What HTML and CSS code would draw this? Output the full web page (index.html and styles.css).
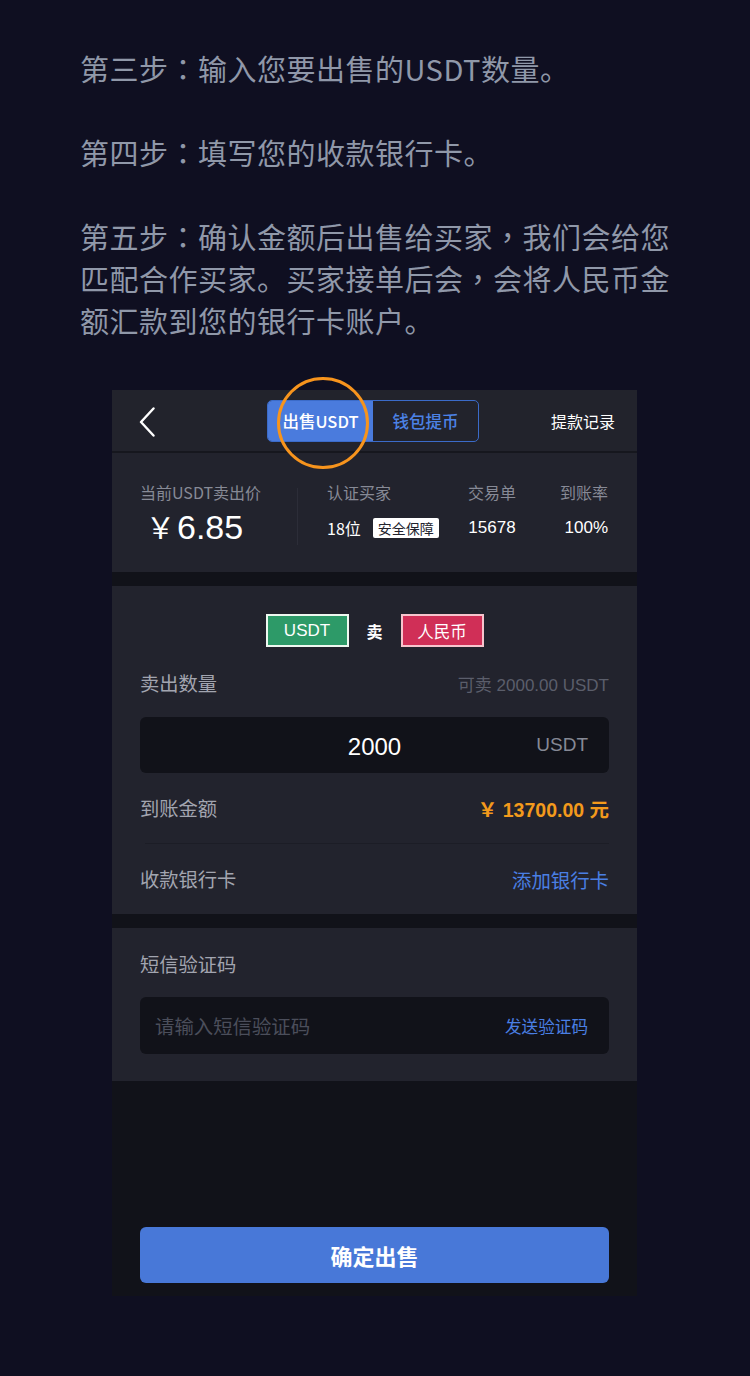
FILE: index.html
```html
<!DOCTYPE html>
<html lang="zh-CN">
<head>
<meta charset="utf-8">
<title>出售USDT</title>
<link rel="stylesheet" href="styles.css">
</head>
<body>
<div class="intro">
  <p>第三步<span class="pc" lang="zh-TW">：</span>输入您要出售的USDT数量。</p>
  <p>第四步<span class="pc" lang="zh-TW">：</span>填写您的收款银行卡。</p>
  <p>第五步<span class="pc" lang="zh-TW">：</span>确认金额后出售给买家<span class="pc" lang="zh-TW">，</span><span class="seg">我们会给您</span>匹配合作买家。买家接单后会<span class="pc" lang="zh-TW">，</span><span class="seg">会将人民币金</span>额汇款到您的银行卡账户。</p>
</div>

<div class="phone">
  <div class="header">
    <svg class="back" width="16" height="30" viewBox="0 0 16 30"><path d="M14.5 1.5 L2 15 L14.5 28.5" fill="none" stroke="#fff" stroke-width="2.4" stroke-linecap="round" stroke-linejoin="round"/></svg>
    <div class="tabs">
      <div class="tab active">出售USDT</div>
      <div class="tab">钱包提币</div>
    </div>
    <div class="record">提款记录</div>
    <div class="ring"></div>
  </div>

  <div class="stats">
    <div class="price-col">
      <div class="label">当前USDT卖出价</div>
      <div class="price"><span class="yen">￥</span>6.85</div>
    </div>
    <div class="vdiv"></div>
    <div class="col col-buyer">
      <div class="label">认证买家</div>
      <div class="val">18位 <span class="badge">安全保障</span></div>
    </div>
    <div class="col col-orders">
      <div class="label">交易单</div>
      <div class="val">15678</div>
    </div>
    <div class="col col-rate">
      <div class="label">到账率</div>
      <div class="val">100%</div>
    </div>
  </div>

  <div class="gap"></div>

  <div class="card sell">
    <div class="pair">
      <span class="tag tag-usdt">USDT</span>
      <span class="sell-word">卖</span>
      <span class="tag tag-cny">人民币</span>
    </div>
    <div class="row-head">
      <span class="field-label">卖出数量</span>
      <span class="avail">可卖 2000.00 USDT</span>
    </div>
    <div class="input amount">
      <span class="amount-val">2000</span>
      <span class="unit">USDT</span>
    </div>
    <div class="line-row divided">
      <span class="field-label">到账金额</span>
      <span class="total">￥ 13700.00 元</span>
    </div>
    <div class="line-row">
      <span class="field-label">收款银行卡</span>
      <span class="link">添加银行卡</span>
    </div>
  </div>

  <div class="gap"></div>

  <div class="card sms">
    <div class="field-label">短信验证码</div>
    <div class="input code">
      <span class="placeholder">请输入短信验证码</span>
      <span class="send">发送验证码</span>
    </div>
  </div>

  <div class="bottom">
    <div class="submit">确定出售</div>
  </div>
</div>
</body>
</html>
```

FILE: styles.css
```css
html, body {
  margin: 0;
  padding: 0;
}
body {
  background: #0f0f21;
  font-family: "Liberation Sans", "Noto Sans CJK SC", sans-serif;
  width: 750px;
  min-height: 1376px;
}
.intro {
  padding: 47px 0 0 80px;
  width: 600px;
  font-family: "Noto Sans CJK SC", sans-serif;
  font-size: 29px;
  letter-spacing: 0.5px;
  line-height: 42px;
  color: #9098a9;
}
.intro p {
  margin: 0 0 42px 0;
}
.intro p:last-child {
  margin-bottom: 0;
}
.intro .pc {
  font-family: "Noto Sans CJK TC", sans-serif;
  line-height: 1;
}

.phone {
  margin: 49px 0 0 112px;
  width: 525px;
  background: #111219;
}

.header {
  position: relative;
  height: 61px;
  background: #22232c;
  border-bottom: 2px solid #16171e;
  display: flex;
  align-items: center;
  padding: 0 22px 0 27px;
}
.back {
  display: block;
  margin-top: 2px;
}
.tabs {
  display: flex;
  margin-left: 112px;
  width: 212px;
  height: 42px;
  box-sizing: border-box;
  border: 1px solid #3b6bc9;
  border-radius: 5px;
  overflow: hidden;
}
.tab {
  flex: 1;
  display: flex;
  align-items: center;
  justify-content: center;
  font-family: "Noto Sans CJK SC", sans-serif;
  font-size: 16.5px;
  font-weight: 500;
  color: #4c82e6;
}
.tab.active {
  background: #4a7bdd;
  color: #ffffff;
}
.record {
  margin-left: auto;
  font-family: "Noto Sans CJK SC", sans-serif;
  font-size: 16px;
  color: #ffffff;
}
.ring {
  position: absolute;
  left: 165px;
  top: -13px;
  width: 86px;
  height: 86px;
  border: 3px solid #f7941d;
  border-radius: 50%;
  pointer-events: none;
}

.stats {
  height: 119px;
  background: #22232d;
  display: flex;
  align-items: flex-start;
  padding: 0 29px 0 28px;
  box-sizing: border-box;
}
.label {
  font-family: "Noto Sans CJK SC", sans-serif;
  font-size: 16px;
  line-height: 22px;
  color: #878a96;
}
.price-col {
  width: 157px;
  padding-top: 28px;
}
.price {
  margin-top: 4px;
  font-size: 34px;
  line-height: 38px;
  color: #ffffff;
  font-family: "Liberation Sans", sans-serif;
  padding-left: 6px;
}
.yen {
  font-family: "Noto Sans CJK SC", sans-serif;
  font-size: 29px;
  margin-right: 2px;
}
.vdiv {
  width: 1px;
  height: 57px;
  margin-top: 35px;
  background: #2c2d38;
}
.col {
  padding-top: 28px;
}
.val {
  margin-top: 15px;
  font-size: 17px;
  line-height: 20px;
  color: #ffffff;
  display: flex;
  align-items: center;
  font-family: "Liberation Sans", "Noto Sans CJK SC", sans-serif;
}
.col-buyer {
  margin-left: 29px;
  width: 135px;
}
.col-buyer .val {
  font-family: "Noto Sans CJK SC", sans-serif;
  font-size: 16px;
}
.badge {
  margin-left: 12px;
  background: #ffffff;
  color: #22232d;
  font-size: 14px;
  line-height: 20px;
  padding: 0 5px;
  border-radius: 2px;
}
.col-orders {
  width: 60px;
  text-align: center;
}
.col-orders .val { justify-content: center; }
.col-rate {
  margin-left: auto;
  text-align: right;
}
.col-rate .val { justify-content: flex-end; }

.gap {
  height: 14px;
  background: #111219;
}

.card {
  background: #22232d;
  padding: 0 28px;
}
.sell {
  padding-top: 28px;
}
.pair {
  display: flex;
  justify-content: center;
  align-items: center;
}
.tag {
  width: 83px;
  height: 33px;
  box-sizing: border-box;
  display: flex;
  align-items: center;
  justify-content: center;
  font-family: "Liberation Sans", "Noto Sans CJK SC", sans-serif;
  font-size: 17px;
  color: #ffffff;
}
.tag-usdt {
  background: #2d9a68;
  border: 2px solid #eef8f0;
}
.tag-cny {
  background: #d02f57;
  border: 2px solid #f7c4cd;
  font-family: "Noto Sans CJK SC", sans-serif;
  font-size: 16.5px;
}
.sell-word {
  width: 52px;
  text-align: center;
  font-family: "Noto Sans CJK SC", sans-serif;
  font-size: 16px;
  font-weight: 700;
  color: #ffffff;
}
.row-head {
  margin-top: 24px;
  display: flex;
  justify-content: space-between;
  align-items: center;
  height: 24px;
}
.field-label {
  font-family: "Noto Sans CJK SC", sans-serif;
  font-size: 19.3px;
  line-height: 24px;
  color: #a2a5b0;
}
.avail {
  font-family: "Liberation Sans", "Noto Sans CJK SC", sans-serif;
  font-size: 17px;
  color: #5b5e6b;
}
.input {
  height: 56px;
  background: #111219;
  border-radius: 6px;
  display: flex;
  align-items: center;
  box-sizing: border-box;
}
.amount {
  margin-top: 22px;
  position: relative;
  justify-content: center;
}
.amount-val {
  font-family: "Liberation Sans", sans-serif;
  font-size: 24px;
  padding-top: 4px;
  color: #ffffff;
}
.unit {
  position: absolute;
  right: 21px;
  font-family: "Liberation Sans", sans-serif;
  font-size: 19px;
  color: #868995;
}
.line-row {
  height: 70px;
  display: flex;
  align-items: center;
  justify-content: space-between;
}
.line-row.divided {
  border-bottom: 1px solid #1c1d26;
  margin: 0 0 0 5px;
}
.line-row.divided .field-label {
  margin-left: -5px;
}
.total {
  font-family: "Liberation Sans", "Noto Sans CJK SC", sans-serif;
  font-size: 19.5px;
  font-weight: 700;
  color: #f39a1c;
}
.link {
  font-family: "Noto Sans CJK SC", sans-serif;
  font-size: 19.4px;
  color: #4a7fe3;
}
.sms {
  padding-top: 24px;
  padding-bottom: 27px;
}
.code {
  margin-top: 21px;
  height: 57px;
  justify-content: space-between;
  padding: 0 21px 0 15px;
}
.placeholder {
  font-family: "Noto Sans CJK SC", sans-serif;
  font-size: 19.4px;
  color: #4b4e5b;
}
.send {
  font-family: "Noto Sans CJK SC", sans-serif;
  font-size: 16.6px;
  color: #4a7fe3;
}
.bottom {
  background: #111219;
  padding: 146px 28px 13px 28px;
}
.submit {
  height: 56px;
  background: #4878d8;
  border-radius: 6px;
  display: flex;
  align-items: center;
  justify-content: center;
  font-family: "Noto Sans CJK SC", sans-serif;
  font-size: 22px;
  font-weight: 700;
  color: #ffffff;
}
```
